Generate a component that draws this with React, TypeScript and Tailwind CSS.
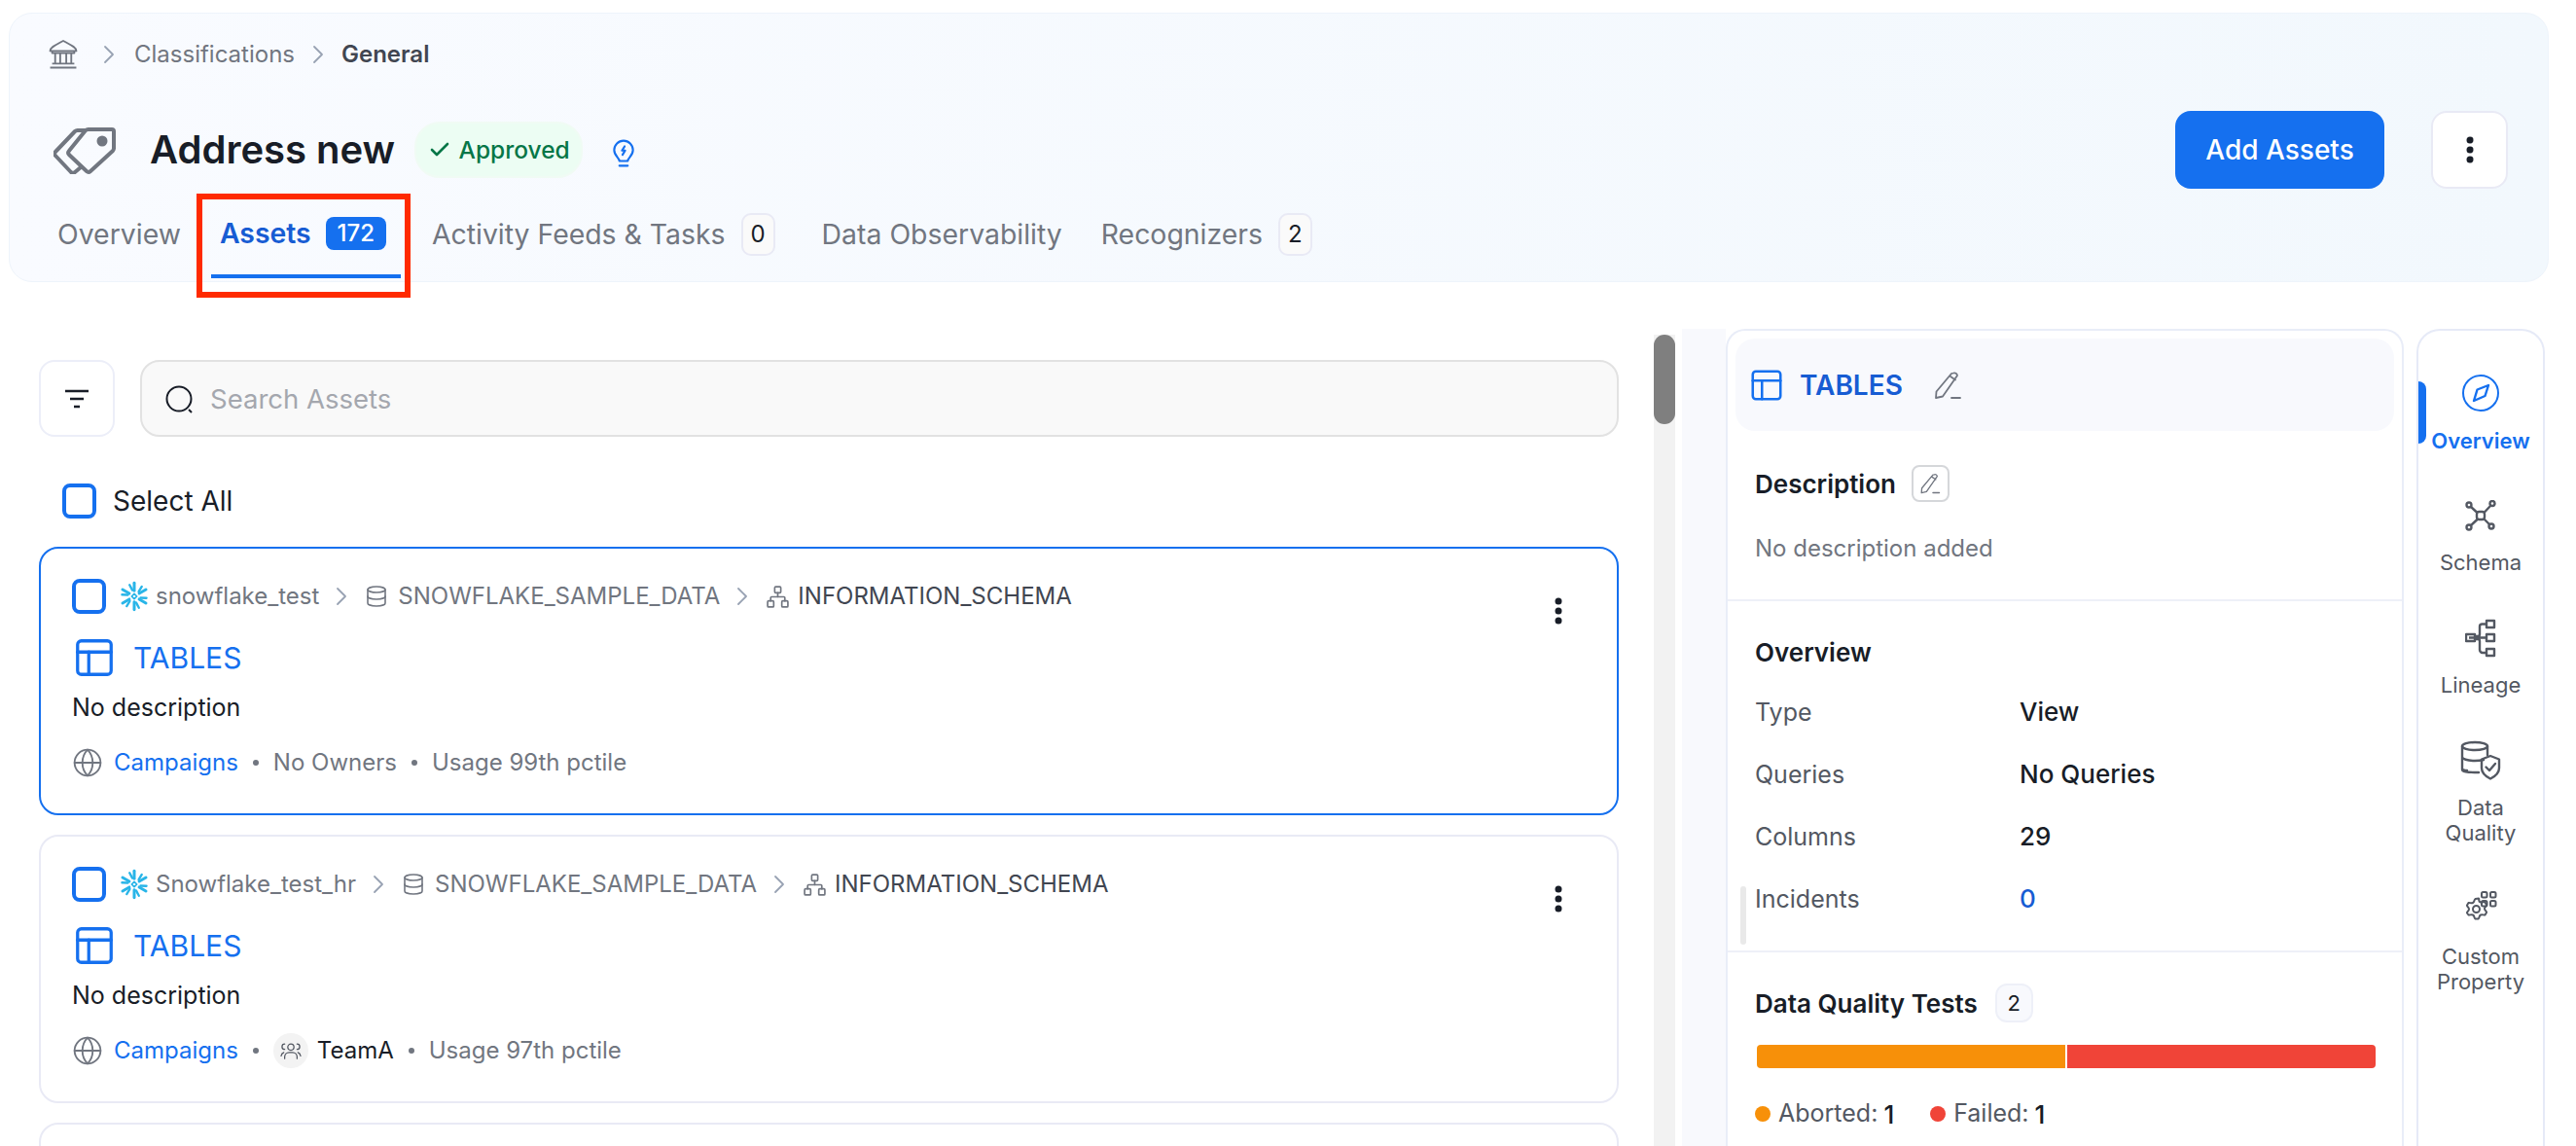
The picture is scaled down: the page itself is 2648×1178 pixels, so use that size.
import React from 'react';
import { Check, Database, Globe, Network, PanelsTopLeft } from 'lucide-react';

const Home = ({ className }: { className?: string }) => (
  <svg viewBox="2 1 30 29" fill="none" stroke="currentColor" strokeWidth="1.8" strokeLinejoin="round" className={className}>
    <path d="M4 12c0-4 6-6 13-10 7 4 13 6 13 10H4Z" />
    <path d="M6 12v2h22v-2M9 14v10M14 14v10M20 14v10M25 14v10M6 24.500h22M4 28.500h26" />
  </svg>
);

const Tags = ({ className }: { className?: string }) => (
  <svg viewBox="0 0 64 50" fill="none" stroke="currentColor" strokeWidth="4" strokeLinejoin="round" className={className}>
    <path d="M36 4h24a2 2 0 0 1 2 2v17a4 4 0 0 1-1 3L38 47a3 3 0 0 1-4 0L16 30a3 3 0 0 1 0-4L33 5a4 4 0 0 1 3-1Z" />
    <path d="M34 5h-9a4 4 0 0 0-3 1L2 27a3 3 0 0 0 0 4l16 17a3 3 0 0 0 4 0l6-5" />
    <circle cx="50" cy="16" r="3.500" fill="currentColor" />
  </svg>
);

const Bulb = ({ className }: { className?: string }) => (
  <svg viewBox="0 0 24 28" fill="none" stroke="currentColor" strokeWidth="2" strokeLinecap="round" strokeLinejoin="round" className={className}>
    <path d="M8 21c0-3-5-5-5-10.500a9 9 0 0 1 18 0C21 16 16 18 16 21H8Z" />
    <path d="M8 25.500h8M13 7l-2.500 4h3L11 15" />
  </svg>
);

const Kebab = ({ className }: { className?: string }) => (
  <svg viewBox="0 0 8 28" fill="currentColor" className={className}>
    <circle cx="4" cy="4" r="3.500" />
    <circle cx="4" cy="14" r="3.500" />
    <circle cx="4" cy="24" r="3.500" />
  </svg>
);

const Chevron = () => (
  <svg viewBox="0 0 12 20" fill="none" stroke="#98a2b3" strokeWidth="1.800" strokeLinecap="round" strokeLinejoin="round" className="block w-[12px] h-[20px] shrink-0">
    <path d="m2 2 8 8-8 8" />
  </svg>
);

const SnowflakeLogo = () => (
  <svg viewBox="0 0 30 30" fill="none" stroke="#29b5e8" strokeWidth="2.800" strokeLinecap="round" className="block w-[32px] h-[32px] shrink-0">
    {[0, 60, 120, 180, 240, 300].map((a) => (
      <g key={a} transform={`rotate(${a} 15 15)`}>
        <path d="M15 2v7.500" />
        <path d="m10.500 4 2.700 5" strokeWidth="2.200" />
      </g>
    ))}
    <path d="m15 12.500 2.500 2.500-2.500 2.500-2.500-2.500Z" strokeWidth="1.600" strokeLinejoin="round" />
  </svg>
);

const Edit = ({ className }: { className?: string }) => (
  <svg viewBox="0 0 30 30" fill="none" stroke="currentColor" strokeWidth="1.800" strokeLinecap="round" strokeLinejoin="round" className={className}>
    <path d="M21 2.500a3 3 0 0 1 4 2.500L10 26.500 3 28l.5-6.500L19 3ZM18 6l5 3.500" />
    <path d="M19 28h9" />
  </svg>
);

const Compass = () => (
  <svg viewBox="0 0 38 38" fill="none" stroke="#1570ef" strokeWidth="2" strokeLinejoin="round" className="w-[38px] h-[38px]">
    <circle cx="19" cy="19" r="18" />
    <path d="M27 11 23.500 22 12 27l3.500-11.500Z" strokeWidth="2.400" />
  </svg>
);

const SchemaIcon = () => (
  <svg viewBox="0 0 32 32" fill="none" stroke="#535862" strokeWidth="2.400" className="w-[32px] h-[32px]">
    <rect x="12" y="12" width="8" height="8" rx="2.500" />
    <circle cx="4" cy="5" r="2.500" />
    <circle cx="28" cy="3.500" r="2.500" />
    <circle cx="4" cy="28" r="2.500" />
    <circle cx="27" cy="27" r="2.500" />
    <path d="m6 7 6.500 6M26 6l-6.500 7M6 26l7-6.500M25 25l-5.500-5.500" />
  </svg>
);

const LineageIcon = () => (
  <svg viewBox="0 0 32 40" fill="none" stroke="#535862" strokeWidth="2.400" strokeLinejoin="round" className="w-[32px] h-[40px]">
    <rect x="1" y="16" width="9" height="7" />
    <rect x="22" y="2" width="8" height="7" />
    <rect x="22" y="16" width="8" height="7" />
    <rect x="22" y="31" width="8" height="7" />
    <path d="M4 19.500h18M10 18h3c1 0 2-1 2-2V8a2.500 2.500 0 0 1 2.500-2.500H22M10 21h3c1 0 2 1 2 2v9a3 3 0 0 0 3 3h4" />
  </svg>
);

const QualityIcon = () => (
  <svg viewBox="0 0 42 42" fill="none" stroke="#535862" strokeWidth="2.400" strokeLinecap="round" strokeLinejoin="round" className="w-[42px] h-[42px]">
    <ellipse cx="15" cy="6" rx="13" ry="4" />
    <path d="M2 6v24c0 2 4 3 17 3M28 6v9M2 17c0 2 5 4 13 4 4 0 7-.500 9-1M2 29c0 1 2 2 5 2" />
    <path d="M31 16l9 3.500v9c0 6-5 9-9 11-4-2-9-5-9-11v-9l9-3.500Z" />
    <path d="m26.500 27.500 3.500 3.500 6-7" />
  </svg>
);

const CustomIcon = () => (
  <svg viewBox="0 0 34 34" fill="none" stroke="#535862" strokeWidth="2" strokeLinejoin="round" className="w-[34px] h-[34px]">
    <path d="M15 7.500c1 2-1 3 2 4 2 .500 3-1 4.500 0l1.500 2.500c.500 1.500-2 2-2 4s2.500 2.500 2 4l-1.500 2.500c-1.500.500-2.500-1-4.500 0s-1 3.500-2.500 4h-3c-1.500-.500-.500-3-2.500-4s-3 .500-4.500 0L3 22.500c-.500-1.500 2-2 2-4s-2.500-2.500-2-4l1.500-2.500c1.500-.500 2.500 1 4.500 0s1-3 2.500-4Z" />
    <circle cx="12.500" cy="18.500" r="3.500" />
    <rect x="18" y="1" width="5.500" height="5.500" rx="1.500" />
    <rect x="27" y="1" width="5.500" height="5.500" rx="1.500" />
    <rect x="18" y="10" width="5.500" height="5.500" rx="1.500" />
    <rect x="27" y="10" width="5.500" height="5.500" rx="1.500" />
  </svg>
);

const TeamIcon = () => (
  <svg viewBox="0 0 24 22" fill="none" stroke="#535862" strokeWidth="1.400" strokeLinecap="round" className="w-[22px] h-[20px]">
    <circle cx="12" cy="7" r="3.500" />
    <path d="M5 20v-2a5 5 0 0 1 5-5h4a5 5 0 0 1 5 5v2M5 3.500a3 3 0 0 0 0 6M1 17a5 5 0 0 1 3-4M19 3.500a3 3 0 0 1 0 6M23 17a5 5 0 0 0-3-4" />
  </svg>
);

const Dot = () => <span className="mx-[15px] w-[6px] h-[6px] rounded-full bg-[#717680] shrink-0" />;

const CountChip = ({ n, className }: { n: number; className?: string }) => (
  <span className={`flex items-center justify-center w-[35px] h-[44px] rounded-[10px] border-2 border-[#e9eaf5] bg-[#fafafa] text-[24px] text-[#181d27] ${className ?? ''}`}>
    {n}
  </span>
);

const Checkbox = () => <span className="w-[35px] h-[36px] rounded-[8px] border-[4px] border-[#1570ef] shrink-0" />;

const AssetCard = ({
  service,
  selected,
  footer,
}: {
  service: string;
  selected?: boolean;
  footer: React.ReactNode;
}) => (
  <div className={`relative h-[276px] shrink-0 rounded-[20px] bg-white pl-[32px] pt-[31px] border-2 ${selected ? 'border-[#1570ef]' : 'border-[#e9eaf5]'}`}>
    <div className="flex items-center h-[36px] text-[24px] text-[#717680]">
      <Checkbox />
      <span className="ml-[13px]"><SnowflakeLogo /></span>
      <span className="ml-[6px]">{service}</span>
      <span className="ml-[17px]"><Chevron /></span>
      <Database size={24} strokeWidth={1.600} className="ml-[18px] shrink-0 text-[#717680]" />
      <span className="ml-[10px]">SNOWFLAKE_SAMPLE_DATA</span>
      <span className="ml-[17px]"><Chevron /></span>
      <Network size={25} strokeWidth={1.600} className="ml-[18px] shrink-0 text-[#717680]" />
      <span className="ml-[8px] text-[#414651]">INFORMATION_SCHEMA</span>
    </div>
    <div className="flex items-center h-[40px] mt-[25px] ml-[4px] text-[#1570ef]">
      <PanelsTopLeft size={46} strokeWidth={1.700} className="shrink-0 -ml-[4px]" />
      <span className="ml-[17px] text-[30px]">TABLES</span>
    </div>
    <div className="mt-[14px] text-[25px] leading-[34px] text-[#181d27]">No description</div>
    <div className="flex items-center h-[36px] mt-[22px] text-[24px] text-[#717680]">
      <Globe size={32} strokeWidth={1.400} className="shrink-0" />
      <span className="ml-[11px] text-[#1570ef]">Campaigns</span>
      {footer}
    </div>
    <Kebab className="absolute right-[56px] top-[50px] w-[8px] h-[28px] text-[#181d27]" />
  </div>
);

const Field = ({ label, value, valueClass }: { label: string; value: string; valueClass?: string }) => (
  <div className="flex items-center h-[64px] text-[25px]">
    <span className="w-[272px] text-[#535862]">{label}</span>
    <span className={`-mt-[3px] text-[26px] font-medium ${valueClass ?? 'text-[#181d27]'}`}>{value}</span>
  </div>
);

const RailItem = ({ icon, label, className }: { icon: React.ReactNode; label: React.ReactNode; className: string }) => (
  <div className={`flex flex-col items-center text-center text-[22px] leading-[26px] text-[#535862] ${className}`}>
    {icon}
    {label}
  </div>
);

export default function App() {
  return (
    <div className="w-[2648px] h-[1178px] overflow-hidden bg-white font-['Inter',sans-serif] text-[#181d27]">
      <header className="relative mx-[9px] mt-[13px] h-[277px] w-[2611px] rounded-[24px] border border-[#eef4fb] bg-gradient-to-r from-[#f9fbff] to-[#f2f8fd] pl-[39px] pr-[41px] pt-[27px]">
        <div className="flex items-center h-[30px] text-[24px]">
          <Home className="w-[32px] h-[30px] text-[#717680]" />
          <span className="ml-[25px]"><Chevron /></span>
          <span className="ml-[20px] text-[#717680]">Classifications</span>
          <span className="ml-[18px]"><Chevron /></span>
          <span className="ml-[18px] font-semibold text-[#414651]">General</span>
        </div>

        <div className="flex items-center h-[80px] mt-[43px]">
          <Tags className="ml-[6px] w-[64px] h-[50px] text-[#717680]" />
          <h1 className="ml-[35px] text-[40px] font-semibold">Address new</h1>
          <span className="ml-[20px] flex items-center h-[58px] w-[173px] justify-center gap-[8px] rounded-[26px] border-2 border-[#f0fbf4] bg-[#ecfdf3] text-[24.500px] font-medium text-[#067647]">
            <Check size={24} strokeWidth={2.600} />
            Approved
          </span>
          <Bulb className="ml-[29px] mt-[8px] w-[26px] h-[30px] text-[#1570ef]" />
          <div className="ml-auto flex items-center gap-[48px]">
            <button className="w-[215px] h-[80px] rounded-[16px] bg-[#1570ef] text-white text-[28px] font-medium">Add Assets</button>
            <button className="flex items-center justify-center w-[79px] h-[80px] rounded-[16px] border-2 border-[#e9eaf5] bg-white">
              <Kebab className="w-[8px] h-[28px] text-[#181d27]" />
            </button>
          </div>
        </div>

        <nav className="flex items-start h-[70px] mt-[22px] text-[28.400px] text-[#717680]">
          <div className="flex items-center h-[50px] ml-[1px] px-[9px]">Overview</div>
          <div className="flex items-center h-[70px] w-[195px] ml-[22px] pl-[9px] pb-[18px] border-b-[4px] border-[#1570ef] text-[#175cd3] font-semibold">
            Assets
            <span className="ml-[15px] flex items-center justify-center w-[62px] h-[34px] rounded-[8px] bg-[#1570ef] text-[24px] text-white font-medium">172</span>
          </div>
          <div className="flex items-center h-[50px] ml-[32px]">
            Activity Feeds &amp; Tasks
            <CountChip n={0} className="ml-[16px]" />
          </div>
          <div className="flex items-center h-[50px] ml-[48px]">Data Observability</div>
          <div className="flex items-center h-[50px] ml-[40px]">
            Recognizers
            <CountChip n={2} className="ml-[16px]" />
          </div>
        </nav>

        {/* red annotation around the Assets tab */}
        <div className="absolute left-[192px] top-[185px] w-[220px] h-[107px] border-[6px] border-[#ff2a00]" />
      </header>

      <main className="flex mt-[48px] h-[840px] pl-[9px]">
        <section className="w-[1713px] shrink-0 flex overflow-hidden rounded-tl-[20px] bg-white">
          <div className="w-[1691px] shrink-0 pl-[31px] pr-[36px] pt-[32px] flex flex-col">
            <div className="flex gap-[26px] h-[79px] shrink-0">
              <button className="flex items-center justify-center w-[78px] rounded-[16px] border-2 border-[#eceef8] bg-white">
                <svg viewBox="0 0 26 20" className="w-[26px] h-[20px] text-[#181d27]" fill="none" stroke="currentColor" strokeWidth="2.400">
                  <path d="M1 2h24M6 10h14M10 18h6" />
                </svg>
              </button>
              <div className="flex flex-1 items-center rounded-[20px] border-2 border-[#e2e2e2] bg-[#f9f9f9] pl-[24px] pt-[2px]">
                <svg viewBox="0 0 30 30" className="w-[30px] h-[30px] text-[#181d27]" fill="none" stroke="currentColor" strokeWidth="2">
                  <circle cx="14" cy="14" r="12.500" />
                  <path d="m24 25 3 3" />
                </svg>
                <span className="ml-[16px] text-[27.500px] text-[#a4a7ae]">Search Assets</span>
              </div>
            </div>
            <div className="flex items-center h-[36px] mt-[48px] ml-[24px] shrink-0 text-[28px]">
              <Checkbox />
              <span className="ml-[17px]">Select All</span>
            </div>
            <div className="flex flex-col gap-[20px] mt-[29px]">
              <AssetCard
                selected
                service="snowflake_test"
                footer={
                  <>
                    <Dot />
                    <span>No Owners</span>
                    <Dot />
                    <span>Usage 99th pctile</span>
                  </>
                }
              />
              <AssetCard
                service="Snowflake_test_hr"
                footer={
                  <>
                    <Dot />
                    <span className="flex items-center justify-center w-[36px] h-[36px] rounded-full bg-[#f3f3f3]"><TeamIcon /></span>
                    <span className="ml-[9px] text-[#181d27]">TeamA</span>
                    <Dot />
                    <span>Usage 97th pctile</span>
                  </>
                }
              />
              <div className="h-[276px] shrink-0 rounded-[20px] border-2 border-[#e9eaf5]" />
            </div>
          </div>
          <div className="w-[22px] shrink-0 mt-[6px] bg-[#f2f2f2]">
            <div className="h-[92px] rounded-full bg-[#7f7f7f]" />
          </div>
        </section>

        <div className="w-[45px] ml-[7px] shrink-0 bg-[#f8f9fd]" />

        <aside className="relative w-[697px] shrink-0 rounded-t-[20px] border-2 border-b-0 border-[#e9edf8] bg-white">
          <div className="flex items-center h-[95px] mt-[8px] mx-[8px] rounded-[20px] bg-[#f8f9fd] pl-[13px] text-[#175cd3]">
            <PanelsTopLeft size={38} strokeWidth={1.600} className="shrink-0 text-[#1570ef]" />
            <span className="ml-[15px] text-[28px] font-semibold">TABLES</span>
            <Edit className="ml-[31px] w-[30px] h-[30px] text-[#717680]" />
          </div>

          <div className="h-[175px] border-b-2 border-[#eef0f8] pl-[28px] pt-[35px]">
            <div className="flex items-center h-[38px]">
              <span className="text-[26px] font-semibold">Description</span>
              <span className="ml-[16px] flex items-center justify-center w-[39px] h-[38px] rounded-[8px] border-2 border-[#d5d7da]">
                <Edit className="w-[22px] h-[22px] text-[#717680]" />
              </span>
            </div>
            <div className="mt-[31px] text-[24px] leading-[34px] text-[#717680]">No description added</div>
          </div>

          <div className="h-[361px] border-b-2 border-[#eef0f8] pl-[28px] pt-[35px]">
            <div className="text-[26px] font-semibold leading-[36px] mb-[12px]">Overview</div>
            <Field label="Type" value="View" />
            <Field label="Queries" value="No Queries" />
            <Field label="Columns" value="29" />
            <Field label="Incidents" value="0" valueClass="text-[#175cd3]" />
          </div>

          <div className="pl-[28px] pt-[32px]">
            <div className="flex items-center h-[40px]">
              <span className="text-[26px] font-semibold">Data Quality Tests</span>
              <span className="ml-[18px] flex items-center justify-center w-[39px] h-[40px] rounded-[12px] border-2 border-[#eef0f8] bg-[#f8f9fd] text-[22px]">2</span>
            </div>
            <div className="flex w-[636px] h-[24px] mt-[23px] ml-[2px] gap-[2px] overflow-hidden rounded-[4px]">
              <div className="w-[317px] bg-[#f79009]" />
              <div className="flex-1 bg-[#f04438]" />
            </div>
            <div className="flex items-center h-[36px] mt-[29px] text-[25px] text-[#535862]">
              <span className="w-[16px] h-[16px] rounded-full bg-[#f79009]" />
              <span className="ml-[8px]">Aborted:</span>
              <span className="ml-[6px] font-medium text-[26px] text-[#181d27]">1</span>
              <span className="ml-[37px] w-[16px] h-[16px] rounded-full bg-[#f04438]" />
              <span className="ml-[8px]">Failed:</span>
              <span className="ml-[6px] font-medium text-[26px] text-[#181d27]">1</span>
            </div>
          </div>

          <div className="absolute left-[13px] top-[571px] w-[6px] h-[60px] rounded-full bg-[#e9e9e9]" />
        </aside>

        <nav className="relative ml-[13px] w-[132px] shrink-0 rounded-t-[24px] border-2 border-b-0 border-[#e6eaf7] bg-white pt-[45px]">
          <span className="absolute left-0 top-[52px] w-[8px] h-[64px] rounded-r-[8px] bg-[#1570ef]" />
          <RailItem
            icon={<Compass />}
            label={<span className="mt-[17px] text-[22px] font-semibold text-[#1570ef]">Overview</span>}
            className=""
          />
          <RailItem icon={<SchemaIcon />} label={<span className="mt-[19px]">Schema</span>} className="mt-[48px]" />
          <RailItem icon={<LineageIcon />} label={<span className="mt-[15px]">Lineage</span>} className="mt-[45px]" />
          <RailItem icon={<QualityIcon />} label={<span className="mt-[14px]">Data<br />Quality</span>} className="mt-[44px]" />
          <RailItem icon={<CustomIcon />} label={<span className="mt-[20px]">Custom<br />Property</span>} className="mt-[47px]" />
        </nav>
      </main>
    </div>
  );
}
